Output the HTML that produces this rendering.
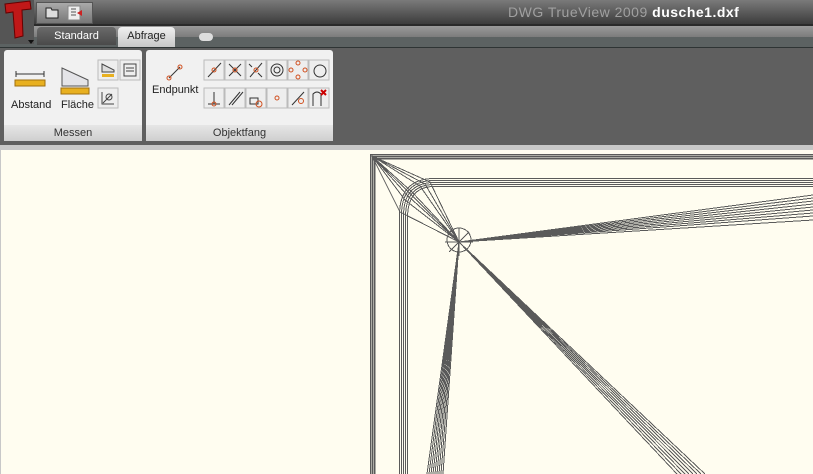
<!DOCTYPE html>
<html><head><meta charset="utf-8"><style>
body{margin:0;width:813px;height:474px;overflow:hidden;background:#5f5f5f;font-family:"Liberation Sans",sans-serif;position:relative}
.a{position:absolute}
</style></head><body>
<div class="a" style="left:0;top:0;width:813px;height:24px;background:linear-gradient(#7a7a7a,#3c3c3c)"></div>
<div class="a" style="left:0;top:24px;width:813px;height:2px;background:#2a2a2a"></div>
<div class="a" style="left:0;top:26px;width:813px;height:11px;background:linear-gradient(#9a9a9a,#7c7c7c)"></div>
<div class="a" style="left:0;top:37px;width:813px;height:10px;background:#5c6262"></div>
<div class="a" style="left:0;top:47px;width:813px;height:1px;background:#2e3434"></div>
<div class="a" style="left:508px;top:4px;font-size:14px;color:#a0a0a0;letter-spacing:0.5px">DWG TrueView 2009 <span style="color:#fff;font-weight:bold">dusche1.dxf</span></div>
<div class="a" style="left:0;top:0;width:34px;height:44px;background:#555"></div>
<svg class="a" style="left:2px;top:0" width="32" height="44"><path d="M3 4 L28 1 L29 9 L20 10 L21 36 L13 38 L11 12 L4 13 Z" fill="#c01818" stroke="#600" stroke-width="1"/><path d="M26 40 L32 40 L29 44Z" fill="#111"/></svg>
<div class="a" style="left:36px;top:2px;width:55px;height:20px;background:linear-gradient(#aaa,#777);border:1px solid #555"></div>
<svg class="a" style="left:44px;top:5px" width="44" height="16"><path d="M2 3 H7 L8 5 H14 V13 H2Z" fill="#ddd" stroke="#222"/><rect x="24" y="1" width="12" height="14" fill="#eee" stroke="#888"/><path d="M27 4 H32 M27 7 H32 M27 10 H32" stroke="#555"/><path d="M38 5 L33 8 L38 11Z" fill="#c22"/></svg>
<div class="a" style="left:37px;top:27px;width:79px;height:18px;background:linear-gradient(#6a6a6a,#4a4a4a);border-radius:4px 4px 0 0;color:#fff;font-size:11px;text-align:center;line-height:18px">Standard</div>
<div class="a" style="left:118px;top:27px;width:57px;height:20px;background:linear-gradient(#f0f0f0,#c8c8c8);border-radius:4px 4px 0 0;color:#222;font-size:11px;text-align:center;line-height:18px">Abfrage</div>
<div class="a" style="left:199px;top:33px;width:14px;height:8px;background:#ddd;border-radius:4px"></div>
<div class="a" style="left:4px;top:50px;width:138px;height:91px;background:#f1f1f1;border-radius:3px"></div>
<div class="a" style="left:4px;top:125px;width:138px;height:16px;background:linear-gradient(#e6e6e6,#cfcfcf);font-size:11px;color:#333;text-align:center;line-height:16px">Messen</div>
<div class="a" style="left:146px;top:50px;width:187px;height:91px;background:#f1f1f1;border-radius:3px"></div>
<div class="a" style="left:146px;top:125px;width:187px;height:16px;background:linear-gradient(#e6e6e6,#cfcfcf);font-size:11px;color:#333;text-align:center;line-height:16px">Objektfang</div>
<div class="a" style="left:11px;top:99px;font-size:11px;color:#222">Abstand</div>
<div class="a" style="left:61px;top:99px;font-size:11px;color:#222">Fläche</div>
<div class="a" style="left:152px;top:84px;font-size:11px;color:#222">Endpunkt</div>
<svg class="a" style="left:0;top:50px" width="340" height="75">
<g stroke="#333" fill="none"><path d="M16 24 H44 M16 21 V27 M44 21 V27"/></g>
<rect x="15" y="30" width="30" height="6" fill="#e8b020" stroke="#a07010"/>
<path d="M62 18 L88 30 L88 36 L62 36Z" fill="#e4e4e8" stroke="#555"/>
<rect x="61" y="38" width="28" height="6" fill="#e8b020" stroke="#a07010"/>
<rect x="98" y="10" width="20" height="20" fill="#eee" stroke="#bbb"/><rect x="120" y="10" width="20" height="20" fill="#eee" stroke="#bbb"/><rect x="98" y="38" width="20" height="20" fill="#eee" stroke="#bbb"/>
<path d="M102 14 L114 20 V22 H102Z" fill="#ddd" stroke="#444"/><rect x="102" y="24" width="12" height="3" fill="#e8b020"/>
<path d="M124 14 H136 V26 H124Z M126 18 H134 M126 21 H134" stroke="#444" fill="none"/>
<path d="M102 42 V54 H114 M103 53 L112 44" stroke="#444" fill="none"/><circle cx="109" cy="47" r="3" fill="none" stroke="#444"/>
<path d="M169 28 L180 17" stroke="#333"/><circle cx="169" cy="28" r="2" fill="none" stroke="#d05020"/><circle cx="180" cy="17" r="2" fill="none" stroke="#d05020"/>
<g fill="#eee" stroke="#bbb">
<rect x="204" y="10" width="20" height="20"/><rect x="225" y="10" width="20" height="20"/><rect x="246" y="10" width="20" height="20"/><rect x="267" y="10" width="20" height="20"/><rect x="288" y="10" width="20" height="20"/><rect x="309" y="10" width="20" height="20"/>
<rect x="204" y="38" width="20" height="20"/><rect x="225" y="38" width="20" height="20"/><rect x="246" y="38" width="20" height="20"/><rect x="267" y="38" width="20" height="20"/><rect x="288" y="38" width="20" height="20"/><rect x="309" y="38" width="20" height="20"/></g>
<g stroke="#333" fill="none"><path d="M208 27 L221 13 M229 14 L241 26 M241 14 L229 26 M250 27 L262 13 M249 14 L252 17 M258 23 L262 27"/><circle cx="277" cy="20" r="6"/><circle cx="277" cy="20" r="3"/><circle cx="320" cy="21" r="6"/><path d="M214 42 V54 M208 54 H220 M229 55 L240 42 M232 55 L243 42 M250 48 H258 V54 H250Z M292 55 L304 42 M313 56 V44 Q317 40 321 44 V56"/></g>
<g fill="none" stroke="#d05020"><circle cx="214" cy="20" r="2"/><circle cx="235" cy="20" r="2"/><circle cx="256" cy="20" r="2"/><circle cx="298" cy="13" r="2"/><circle cx="298" cy="27" r="2"/><circle cx="291" cy="20" r="2"/><circle cx="305" cy="20" r="2"/><circle cx="214" cy="54" r="2"/><circle cx="277" cy="48" r="2"/><circle cx="301" cy="51" r="2.5"/><circle cx="259" cy="54" r="3"/></g>
<path d="M321 40 L326 45 M326 40 L321 45" stroke="#c00" stroke-width="2"/>
</svg>
<div class="a" style="left:0;top:145px;width:813px;height:329px;background:#c8c8c8"></div>
<div class="a" style="left:1px;top:150px;width:812px;height:324px;background:#fffdf0"></div>
<svg class="a" style="left:0;top:0" width="813" height="474" stroke="#5a5a5a" fill="none" stroke-width="1" shape-rendering="crispEdges">
<path d="M370.5 474 V154.5 H813 M372.5 474 V156.5 H813 M374.5 474 V158.5 H813" stroke-width="1.5"/>
<path d="M399.5 474 V215 Q399.5 180 432 178.5 H813 M401.5 474 V215 Q401.5 182 432 180.5 H813 M403.5 474 V216 Q403.5 184 432 182.5 H813 M405.5 474 V217 Q405.5 186 432 184.5 H813 M407.5 474 V218 Q407.5 188 432 186.5 H813"/>
<circle cx="459" cy="240" r="12"/>
<path d="M372 156 L430 182 L459 242 M372 156 L420 186 L459 242 M372 156 L412 192 L459 242 M372 156 L405 200 L459 242 M372 156 L400 212 L459 242 M372 156 L459 242 M372 156 L425 184 L459 242 M372 156 L408 196 L459 242"/>
<path d="M459 242 L813 195 M459 242 L813 198 M459 242 L813 201 M459 242 L813 204 M459 242 L813 207 M459 242 L813 210 M459 242 L813 213 M459 242 L813 216 M459 242 L813 220"/>
<path d="M459 242 L427 474 M459 242 L429 474 M459 242 L431 474 M459 242 L433 474 M459 242 L435 474 M459 242 L437 474 M459 242 L439 474 M459 242 L441 474 M459 242 L443 474"/>
<path d="M459 242 L677 474 M459 242 L681 474 M459 242 L685 474 M459 242 L689 474 M459 242 L693 474 M459 242 L697 474 M459 242 L701 474 M459 242 L705 474"/>
<path d="M459 228 V256 M445 242 H473 M449 232 L469 252 M469 232 L449 252"/>
</svg>
</body></html>
